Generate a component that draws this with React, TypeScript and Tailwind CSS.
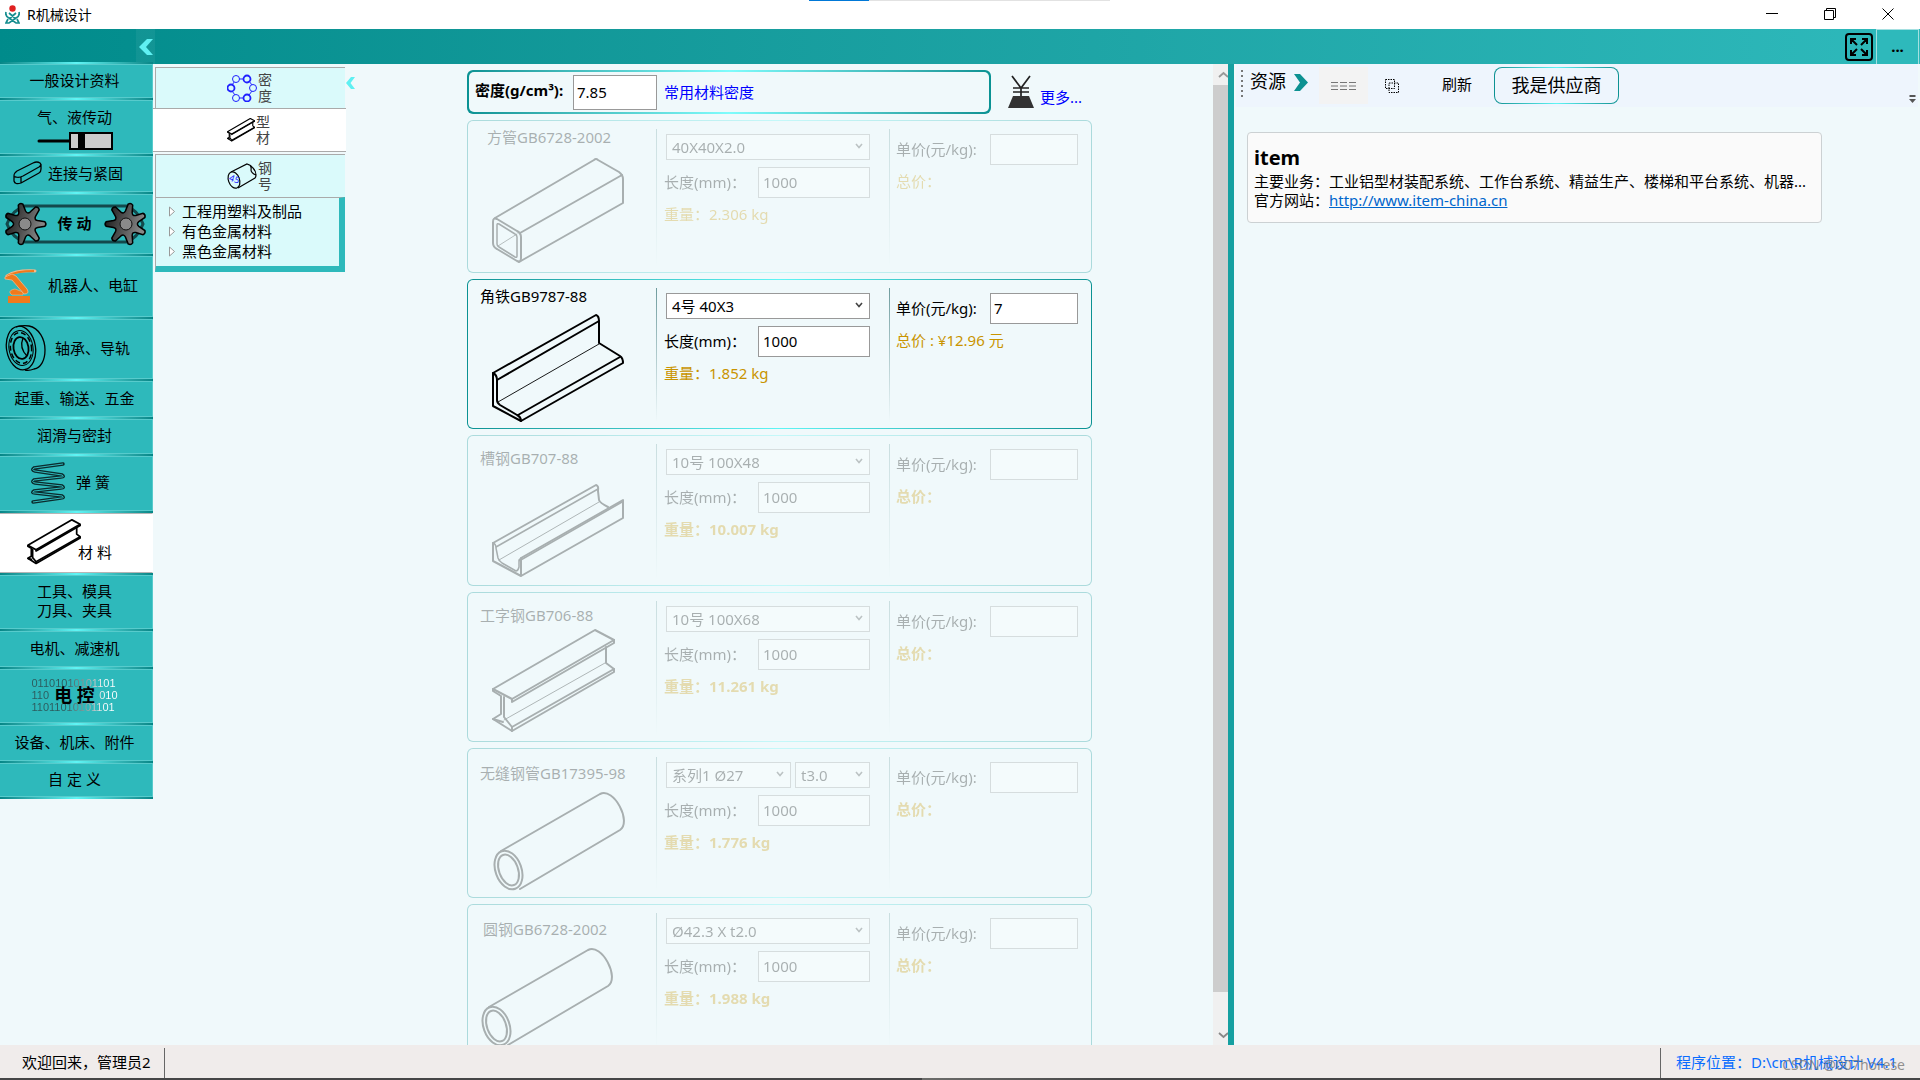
import React, { type ReactNode } from "react";

type DrawingKind = "square" | "angle" | "channel" | "beam" | "pipe";

type Profile = {
  id: string;
  name: string;
  titleClass: string;
  specs: string[];
  price: string;
  total: string;
  weight: string;
  bold: boolean;
  active: boolean;
  drawing: DrawingKind;
  drawingClass: string;
};

const profiles: Profile[] = [
  { id: "fg", name: "方管GB6728-2002", titleClass: "pl-[19px] pt-[5px]", specs: ["40X40X2.0"], price: "", total: "总价：", weight: "2.306 kg", bold: false, active: false, drawing: "square", drawingClass: "ml-[23px]" },
  { id: "jt", name: "角铁GB9787-88", titleClass: "pl-[12px] pt-[5px]", specs: ["4号 40X3"], price: "7", total: "总价 : ¥12.96 元", weight: "1.852 kg", bold: false, active: true, drawing: "angle", drawingClass: "ml-[23px]" },
  { id: "cg", name: "槽钢GB707-88", titleClass: "pl-[12px] pt-[11px]", specs: ["10号 100X48"], price: "", total: "总价：", weight: "10.007 kg", bold: true, active: false, drawing: "channel", drawingClass: "ml-[23px]" },
  { id: "gz", name: "工字钢GB706-88", titleClass: "pl-[12px] pt-[11px]", specs: ["10号 100X68"], price: "", total: "总价：", weight: "11.261 kg", bold: true, active: false, drawing: "beam", drawingClass: "ml-[23px]" },
  { id: "wf", name: "无缝钢管GB17395-98", titleClass: "pl-[12px] pt-[13px]", specs: ["系列1 Ø27", "t3.0"], price: "", total: "总价：", weight: "1.776 kg", bold: true, active: false, drawing: "pipe", drawingClass: "ml-[24px]" },
  { id: "yg", name: "圆钢GB6728-2002", titleClass: "pl-[15px] pt-[13px]", specs: ["Ø42.3 X t2.0"], price: "", total: "总价：", weight: "1.988 kg", bold: true, active: false, drawing: "pipe", drawingClass: "ml-[12px]" },
];

const beamOutline = (
  <>
    <path d="M2 61L104 2L123 12L21 71Z" />
    <path d="M2 61V63L10 68V86L2 91L21 103L123 44V41L115 35V19" />
    <path d="M21 71V74L123 15V12" />
    <path d="M13 69V89L21 99L123 41M21 99V103M2 91L12 94" />
  </>
);

function ProfileDrawing({ kind, className }: { kind: DrawingKind; className: string }) {
  const common = { fill: "none", stroke: "black", strokeWidth: 2, strokeLinejoin: "round" as const, strokeLinecap: "round" as const, className: `shrink-0 ${className}`, "aria-hidden": true };
  switch (kind) {
    case "square":
      return (
        <svg {...common} width="134" height="109" viewBox="0 0 134 109">
          <path d="M4 61L103 3Q105 1 107 3L128 15Q132 18 132 22V46L28 105" />
          <path d="M2 65Q2 60 6 62L26 74Q30 76 30 80V101Q30 106 26 104L6 92Q2 90 2 86Z" />
          <path d="M6 68Q6 66 8 67L24 77Q26 78 26 80V99Q26 101 24 100L8 90Q6 89 6 87Z" strokeWidth="1.5" />
          <path d="M29 76L131 18" />
          <path d="M7 89L26 77" strokeWidth="0.8" />
        </svg>
      );
    case "angle":
      return (
        <svg {...common} width="134" height="109" viewBox="0 0 134 109">
          <path d="M105 2Q108 3 108 8V30L129 43Q132 45 132 50L30 108L2 93V60Z" />
          <path d="M2 60Q6 62 6 67V87Q6 90 9 92L26 102Q30 104 30 108M6 67L108 8M27 102L129 44" />
          <path d="M7 89L108 31" strokeWidth="0.9" />
        </svg>
      );
    case "channel":
      return (
        <svg {...common} width="134" height="96" viewBox="0 0 134 96">
          <path d="M2 60L105 2Q108 3 107 8L108 17Q109 20 117 24" />
          <path d="M2 60V78L30 93V75L132 17V35L30 93" />
          <path d="M2 60Q5 61 5 65L7 75Q8 78 11 80L25 88Q27 88 28 84V77L30 75M5 64L107 6M28 78L131 19" strokeWidth="1.5" />
          <path d="M8 77L108 19" strokeWidth="0.9" />
        </svg>
      );
    case "beam":
      return (
        <svg {...common} width="125" height="107" viewBox="0 0 125 107">
          {beamOutline}
          <path d="M13 92L114 35" strokeWidth="0.9" />
        </svg>
      );
    default:
      return (
        <svg {...common} width="134" height="100" viewBox="0 0 134 100">
          <path d="M9 60L108 3C122 -4 140 31 128 39L28 98" />
          <ellipse cx="16.500" cy="79" rx="13" ry="20" transform="rotate(-20 16.500 79)" />
          <ellipse cx="16.500" cy="79" rx="9.500" ry="16" transform="rotate(-20 16.500 79)" />
        </svg>
      );
  }
}

function gearPath(teeth: number, inner: number, outer: number, start: number) {
  const step = (Math.PI * 2) / teeth;
  const at = (r: number, a: number) => `${(r * Math.cos(a)).toFixed(2)} ${(r * Math.sin(a)).toFixed(2)}`;
  let d = "";
  for (let i = 0; i < teeth; i++) {
    const a = start + i * step;
    d += `${i === 0 ? "M" : "L"}${at(inner, a - step * 0.3)}`;
    d += `L${at(outer - 1, a - step * 0.13)}Q${at(outer + 1, a)} ${at(outer - 1, a + step * 0.13)}`;
    d += `L${at(inner, a + step * 0.3)}Q${at(inner - 3, a + step * 0.5)} ${at(inner, a + step * 0.7)}`;
  }
  return d + "Z";
}

function GearBelt() {
  return (
    <svg width="144" height="46" viewBox="0 0 144 46" className="absolute left-1 top-[6px]" aria-hidden>
      <defs>
        <linearGradient id="gearFill" x1="0" y1="0" x2="1" y2="0.3">
          <stop offset="0" stopColor="#111" />
          <stop offset="1" stopColor="#888" />
        </linearGradient>
      </defs>
      <path d="M21 5H122Q134 9 139 23Q134 37 122 41H21Q8 37 3 23Q8 9 21 5Z" fill="none" stroke="#13494c" strokeWidth="3" />
      <path d={gearPath(7, 13, 21, 0)} transform="translate(21 23)" fill="url(#gearFill)" stroke="#000" strokeWidth="1.500" />
      <path d={gearPath(7, 13, 21, Math.PI)} transform="translate(122 23)" fill="url(#gearFill)" stroke="#000" strokeWidth="1.500" />
      <circle cx="21" cy="23" r="6" fill="#8a8a8a" stroke="#111" strokeWidth="1" />
      <circle cx="122" cy="23" r="6" fill="#8a8a8a" stroke="#111" strokeWidth="1" />
    </svg>
  );
}

const Cylinder = () => (
  <svg width="76" height="20" viewBox="0 0 76 20" aria-hidden>
    <path d="M2 10H32" stroke="#000" strokeWidth="3" strokeLinecap="round" />
    <rect x="33" y="2" width="42" height="16" fill="#ccc" stroke="#000" strokeWidth="2" />
    <rect x="41" y="1" width="7" height="18" fill="#000" />
  </svg>
);

const KeyIcon = () => (
  <svg width="29" height="24" viewBox="0 0 29 24" fill="none" stroke="#000" strokeWidth="1.300" strokeLinejoin="round" aria-hidden>
    <path d="M1 15Q1 12 4 10L20 2Q24 0 27 2Q29 4 26 6L10 15Q6 17 3 16Q1 16 1 15V20Q2 24 8 22L26 12Q28 11 28 8V3M8 16V22" />
  </svg>
);

const RobotIcon = () => (
  <svg width="33" height="34" viewBox="0 0 33 34" aria-hidden>
    <path d="M3 7Q12 1 31 2" fill="none" stroke="#f6b98a" strokeWidth="3" strokeLinecap="round" />
    <path d="M3 7Q12 2 30 2" fill="none" stroke="#f07a1c" strokeWidth="2" />
    <path d="M6 24Q5 21 11 20L19 23V26H8Z" fill="#f07a1c" stroke="#f6b98a" strokeWidth="0.600" />
    <path d="M1 8L8 5L12 7L23 20Q26 25 20 25L8 11L1 10Z" fill="#f07a1c" stroke="#f6b98a" strokeWidth="0.800" />
    <rect x="4" y="27" width="22" height="7" fill="#f07a1c" />
  </svg>
);

const BearingIcon = () => (
  <svg width="41" height="46" viewBox="0 0 41 46" fill="none" stroke="#000" strokeWidth="1.300" aria-hidden>
    <path d="M11 2Q18 0 24 1C34 3 40 14 40 25C40 35 36 43 29 44Q24 46 20 45" />
    <ellipse cx="16" cy="23" rx="14.500" ry="22" transform="rotate(-9 16 23)" />
    <ellipse cx="16" cy="23" rx="12" ry="17.500" transform="rotate(-9 16 23)" strokeWidth="1" />
    <ellipse cx="16" cy="23" rx="10.500" ry="15.500" transform="rotate(-9 16 23)" strokeWidth="1.500" strokeDasharray="5 3" />
    <ellipse cx="16" cy="23" rx="7.500" ry="11" transform="rotate(-9 16 23)" strokeWidth="1.800" />
    <path d="M18 13Q14 23 22 31" />
  </svg>
);

const SpringIcon = () => (
  <svg width="34" height="42" viewBox="0 0 34 42" fill="none" aria-hidden>
    <path d="M32 2L3 6Q0 8 4 9L31 13Q34 15 30 15L3 18Q0 20 4 21L31 24Q34 26 30 26L3 29Q0 31 4 31L31 34Q34 36 30 36L2 40" stroke="#0b2c2e" strokeWidth="3.400" strokeLinecap="round" />
    <path d="M32 2L3 6Q0 8 4 9L31 13Q34 15 30 15L3 18Q0 20 4 21L31 24Q34 26 30 26L3 29Q0 31 4 31L31 34Q34 36 30 36L2 40" stroke="#2eb9bb" strokeWidth="1" />
  </svg>
);

function BeamIcon({ className, weight }: { className: string; weight: number }) {
  return (
    <svg className={className} viewBox="0 0 125 105" fill="none" stroke="#000" strokeWidth={weight} strokeLinejoin="round" aria-hidden>
      {beamOutline}
    </svg>
  );
}

function BinaryLabel() {
  return (
    <span className="relative block w-[86px] font-['Liberation_Sans',sans-serif] text-[11px] leading-[12px]">
      <span className="block bg-linear-to-r from-[#2c5a5c] from-40% via-[#a3a3a5] via-65% to-white to-85% bg-clip-text text-left text-transparent">
        <span className="block">01101010101101</span>
        <span className="flex justify-between"><span>110</span><span>010</span></span>
        <span className="block">11011010101101</span>
      </span>
      <span className="absolute inset-0 flex items-center justify-center font-['Noto_Sans','Noto_Sans_CJK_SC',sans-serif] text-[18px] font-bold">电 控</span>
    </span>
  );
}

function NavItem({ height, active = false, className = "justify-center", children }: { height: string; active?: boolean; className?: string; children: ReactNode }) {
  return (
    <li className={`flex flex-col ${height}`}>
      <span className="h-[2px] shrink-0 bg-linear-to-r from-[#058687] via-[#5ff5f5] to-[#058687]" />
      <button
        type="button"
        className={`relative flex w-full flex-1 items-center border-y border-r pb-[2px] pr-[3px] leading-[19px] ${active ? "border-[#b5b5b5] border-r-white bg-white" : "border-[#57cbcc] bg-[#2eb9bb]"} ${className}`}
      >
        {children}
      </button>
    </li>
  );
}

function Sidebar() {
  return (
    <nav className="relative z-10 -mt-[2px] w-[153px] shrink-0" aria-label="分类">
      <ul>
        <NavItem height="h-[36px]">一般设计资料</NavItem>
        <NavItem height="h-[56px]" className="flex-col justify-end gap-1"><span>气、液传动</span><Cylinder /></NavItem>
        <NavItem height="h-[38px]" className="gap-[6px] pl-[13px]"><KeyIcon />连接与紧固</NavItem>
        <NavItem height="h-[62px]"><GearBelt /><b className="relative">传 动</b></NavItem>
        <NavItem height="h-[63px]" className="gap-[11px] pl-[4px]"><RobotIcon />机器人、电缸</NavItem>
        <NavItem height="h-[62px]" className="gap-[9px] pl-[5px]"><BearingIcon />轴承、导轨</NavItem>
        <NavItem height="h-[38px]">起重、输送、五金</NavItem>
        <NavItem height="h-[37px]">润滑与密封</NavItem>
        <NavItem height="h-[57px]" className="gap-[11px] pl-[31px]"><SpringIcon />弹 簧</NavItem>
        <NavItem height="h-[62px]" active className="pl-[27px]"><BeamIcon className="w-[54px]" weight={4} /><span className="-ml-[3px] pt-5">材 料</span></NavItem>
        <NavItem height="h-[56px]">工具、模具<br />刀具、夹具</NavItem>
        <NavItem height="h-[38px]">电机、减速机</NavItem>
        <NavItem height="h-[56px]"><BinaryLabel /></NavItem>
        <NavItem height="h-[38px]">设备、机床、附件</NavItem>
        <NavItem height="h-[36px]">自 定 义</NavItem>
      </ul>
      <div className="h-[2px] bg-linear-to-r from-[#058687] via-[#5ff5f5] to-[#058687]" />
    </nav>
  );
}

const RingIcon = () => (
  <svg width="30" height="28" viewBox="0 0 30 28" fill="none" stroke="#2020ff" aria-hidden>
    <path d="M9 5H20M9 24H20M5 11L8 7M5 17L8 21M25 11L22 7M25 17L22 21" strokeWidth="1" />
    <g fill="#dafafb">
      <circle cx="9" cy="5" r="3.500" /><circle cx="26" cy="14" r="3.500" /><circle cx="9" cy="24" r="3.500" />
      <g strokeWidth="1.800"><circle cx="20" cy="5" r="3.500" /><circle cx="4" cy="14" r="3.500" /><circle cx="20" cy="24" r="3.500" /></g>
    </g>
  </svg>
);

const SteelIcon = () => (
  <svg width="30" height="28" viewBox="0 0 30 28" fill="none" stroke="#000" strokeWidth="1.200" aria-hidden>
    <path d="M4 10L20 2Q25 3 24 8Q24 11 29 13Q29 15 28 16L11 26M20 2Q24 3 26 6Q29 9 29 13" />
    <ellipse cx="7" cy="18" rx="5.500" ry="8.500" transform="rotate(-20 7 18)" />
    <text x="2" y="20" fill="#2020ff" stroke="none" fontSize="9" transform="rotate(20 7 18)">45</text>
  </svg>
);

function SubMenu() {
  const entry = "flex w-full items-center justify-center gap-px pr-[2px] text-[14px] leading-4 text-[#444]";
  const stack = "flex w-[14px] flex-col pb-px";
  return (
    <div className="w-[193px] shrink-0">
      <div className="flex flex-col pt-[3px]">
        <div className="pl-[2px] pr-px"><button type="button" className={`${entry} h-[41px] border-l border-t border-[#aaa] bg-[#dafafb]`}><RingIcon /><span className={stack}><span>密</span><span>度</span></span></button></div>
        <button type="button" className={`${entry} h-[44px] border-y border-[#aaa] bg-white`}><BeamIcon className="w-7" weight={5} /><span className={stack}><span>型</span><span>材</span></span></button>
        <div className="pl-[2px] pr-px pt-[2px]"><button type="button" className={`${entry} h-[43px] border-l border-t border-[#aaa] bg-[#dafafb]`}><SteelIcon /><span className={stack}><span>钢</span><span>号</span></span></button></div>
        <ul className="ml-[2px] mr-px border-b-[6px] border-l border-r-[6px] border-t border-[#2eb9bb] border-l-[#aaa] border-t-[#aaa] bg-[#dafafb] pb-[5px] pt-[3px] text-[15px] leading-5">
          {["工程用塑料及制品", "有色金属材料", "黑色金属材料"].map((label) => (
            <li key={label}>
              <button type="button" className="flex items-center gap-[7px] pl-[13px] text-left">
                <svg width="6" height="11" viewBox="0 0 6 11" fill="#fff" stroke="#999" aria-hidden><path d="M0.500 1V10L5.500 5.500Z" /></svg>
                {label}
              </button>
            </li>
          ))}
        </ul>
      </div>
    </div>
  );
}

const SmallChevron = () => (
  <svg width="8" height="6" viewBox="0 0 8 6" fill="none" stroke="#444" strokeWidth="1.600" className="pointer-events-none absolute right-[7px] top-[9px]" aria-hidden><path d="M1 1L4 4.500L7 1" /></svg>
);

function SpecSelect({ label, value, className }: { label: string; value: string; className: string }) {
  return (
    <span className={`relative block ${className}`}>
      <select aria-label={label} defaultValue={value} className="h-[26px] w-full appearance-none border border-[#999] bg-white pl-[5px] leading-5 outline-none">
        <option>{value}</option>
      </select>
      <SmallChevron />
    </span>
  );
}

function ProfileCard({ p, height }: { p: Profile; height: string }) {
  const line = "absolute bottom-[6px] left-0 top-[8px] w-px bg-linear-to-b from-[#6f9c9e] to-transparent";
  const weightClass = p.bold ? "font-bold" : "font-normal";
  return (
    <section className={`${height} shrink-0 rounded-[6px] bg-linear-to-r from-[#0a9293] via-[#5ff5f5] to-[#0a9293] p-px ${p.active ? "" : "opacity-30"}`}>
      <div className="grid h-full grid-cols-[188px_233px_1fr] rounded-[5px] bg-[#f0f9fb]">
        <div className="flex flex-col justify-between pb-[6px]">
          <h3 className={`leading-[22px] ${p.titleClass}`}>{p.name}</h3>
          <ProfileDrawing kind={p.drawing} className={p.drawingClass} />
        </div>
        <div className="relative pl-[8px] pr-[19px] pt-[13px]">
          <span className={line} />
          <div className="flex gap-1 pl-[2px]">
            {p.specs.map((s, i) => (
              <SpecSelect key={s} label={`${p.name} 规格`} value={s} className={i === 0 ? "flex-1" : "w-[75px]"} />
            ))}
          </div>
          <div className="mt-[7px] flex items-center justify-between">
            <label htmlFor={`${p.id}-len`}>长度(mm)：</label>
            <input id={`${p.id}-len`} defaultValue="1000" className="h-[31px] w-[112px] border border-[#999] bg-white px-1 pb-px outline-none" />
          </div>
          <p className={`mt-[5px] leading-[22px] text-[#c99400] ${weightClass}`}>重量：{p.weight}</p>
        </div>
        <div className="relative pl-[7px] pr-[13px] pt-[13px]">
          <span className={line} />
          <div className="flex items-center justify-between">
            <label htmlFor={`${p.id}-price`}>单价(元/kg):</label>
            <input id={`${p.id}-price`} defaultValue={p.price} className="h-[31px] w-[88px] border border-[#999] bg-white px-[3px] pb-px outline-none" />
          </div>
          <p className={`mt-[5px] leading-[22px] text-[#c99400] ${weightClass}`}>{p.total}</p>
        </div>
      </div>
    </section>
  );
}

function Calculator() {
  return (
    <main className="relative flex min-w-0 flex-1">
      <button type="button" aria-label="收起" className="absolute left-0 top-[13px]">
        <svg width="9" height="12" viewBox="0 0 9 12" fill="#5ff0f2" aria-hidden><path d="M5 0H9L4.500 6L9 12H5L0 6Z" /></svg>
      </button>
      <div className="min-w-0 flex-1 overflow-hidden">
        <div className="mx-auto flex w-[625px] flex-col gap-[6px] pt-[6px]">
          <div className="flex items-start">
            <div className="w-[524px] rounded-[6px] bg-linear-to-r from-[#0a9293] via-[#7ffcfc] to-[#0a9293] p-[2px]">
              <div className="flex h-[40px] items-center rounded-[5px] bg-[#f0f9fb] pl-[6px]">
                <label htmlFor="density" className="w-[98px] pb-[3px] font-bold">密度(g/cm³):</label>
                <input id="density" defaultValue="7.85" className="h-[35px] w-[84px] border border-[#999] bg-white px-[3px] outline-none" />
                <a href="#density" className="ml-[7px] text-[#0000ff]">常用材料密度</a>
              </div>
            </div>
            <div className="ml-[16px] flex h-[44px] items-start pt-[5px]">
              <svg width="28" height="34" viewBox="0 0 28 34" fill="none" stroke="#222" strokeWidth="1.700" aria-hidden>
                <path d="M5 1L14 13L23 1M14 13V22M6 13H22M6 17H22" />
                <path d="M6 21H22L27 33H1Z" fill="#333" stroke="none" />
              </svg>
              <a href="#more" className="ml-[5px] pt-[11px] leading-[22px] text-[#0000ff]">更多...</a>
            </div>
          </div>
          {profiles.map((p, i) => (
            <ProfileCard key={p.id} p={p} height={i === 0 ? "h-[153px]" : i === 2 ? "h-[151px]" : "h-[150px]"} />
          ))}
        </div>
      </div>
      <div className="flex w-[15px] shrink-0 flex-col overflow-hidden bg-[#f0f0f0]" aria-hidden>
        <svg width="17" height="21" viewBox="0 0 17 21" fill="none" stroke="#999" strokeWidth="1.800" className="shrink-0"><path d="M6 13L10.500 9L15 13" /></svg>
        <div className="flex-[907] bg-[#cdcdcd]" />
        <div className="flex-[36]" />
        <svg width="17" height="17" viewBox="0 0 17 17" fill="none" stroke="#888" strokeWidth="1.800" className="shrink-0"><path d="M6 5L10.500 9L15 5" /></svg>
      </div>
    </main>
  );
}

function ResourcePanel() {
  return (
    <aside className="w-[686px] shrink-0">
      <div className="mx-[2px] flex h-[43px] items-start bg-[#eef5fd] pl-[5px]">
        <span className="mt-[6px] h-[29px] w-[2px] bg-[repeating-linear-gradient(to_bottom,#777_0_2px,transparent_2px_5px)]" />
        <h2 className="ml-[7px] mt-[4px] text-[18px] leading-[26px]">资源</h2>
        <svg width="14" height="17" viewBox="0 0 14 17" fill="#0c9192" className="ml-[8px] mt-[10px]" aria-hidden><path d="M0 0H6L14 8.500L6 17H0L6 8.500Z" /></svg>
        <button type="button" aria-label="列表" className="ml-[11px] mt-[3px] flex h-[37px] w-[49px] items-center justify-center bg-[#f3f3f3]">
          <svg width="26" height="8" viewBox="0 0 26 8" stroke="#777" strokeWidth="1" aria-hidden><path d="M0 0.500H7M9 0.500H16M18 0.500H25M0 4H7M9 4H16M18 4H25M0 7.500H7M9 7.500H16M18 7.500H25" /></svg>
        </button>
        <button type="button" aria-label="窗口" className="ml-[17px] mt-[15px]">
          <svg width="14" height="14" viewBox="0 0 14 14" fill="none" stroke="#000" strokeDasharray="1.500 1" aria-hidden><path d="M0.500 0.500H9.500V9.500H0.500Z" /><path d="M4 4H13.500V13.500H4Z" /></svg>
        </button>
        <button type="button" className="ml-[43px] mt-[9px] leading-[22px]">刷新</button>
        <div className="ml-[22px] mt-[3px] rounded-[8px] bg-linear-to-r from-[#0c9192] via-[#5ff5f5] to-[#0c9192] p-[1px]">
          <button type="button" className="flex h-[35px] w-[123px] items-center justify-center rounded-[7px] bg-[#eef5fd] text-[18px]">我是供应商</button>
        </div>
        <svg width="7" height="8" viewBox="0 0 7 8" fill="#555" className="ml-auto mr-[2px] mt-[31px]" aria-hidden><path d="M0.500 0H6.500V2H0.500ZM0 4H7L3.500 8Z" /></svg>
      </div>
      <article className="ml-[13px] mr-[98px] mt-[25px] h-[91px] rounded-[4px] border border-[#ccd1d3] bg-[#fafafa] px-[6px] pt-[11px]">
        <h3 className="text-[20px] font-bold leading-[28px]">item</h3>
        <p className="truncate leading-[19px]">主要业务：工业铝型材装配系统、工作台系统、精益生产、楼梯和平台系统、机器...</p>
        <p className="leading-[19px]">官方网站：<a href="#item" className="text-[#0066cc] underline">http://www.item-china.cn</a></p>
      </article>
    </aside>
  );
}

function TitleBar() {
  return (
    <header className="relative flex h-[29px] shrink-0 items-center justify-between bg-white">
      <div className="flex items-center gap-[7px] pl-[5px]">
        <svg width="15" height="20" viewBox="0 0 15 20" fill="none" aria-hidden>
          <circle cx="7.500" cy="3.500" r="3.200" fill="#e02020" />
          <path d="M1 7Q0 11 4 13L11 18H14L12 14M14 7Q15 11 11 13L4 18H1L3 14M4 8L11 14M11 8L4 14" stroke="#168d8f" strokeWidth="1.700" />
        </svg>
        <h1 className="pb-px text-[14px]">R机械设计</h1>
      </div>
      <div className="absolute left-[809px] top-0 flex h-px w-[301px] bg-[#e2e2e2]"><span className="w-[60px] bg-[#0078d7]" /></div>
      <div className="flex items-center gap-[46px] pb-px pr-[26px] text-black">
        <button type="button" aria-label="最小化"><svg width="12" height="12" viewBox="0 0 12 12" stroke="currentColor" aria-hidden><path d="M0 5.500H12" /></svg></button>
        <button type="button" aria-label="还原"><svg width="12" height="12" viewBox="0 0 12 12" fill="none" stroke="currentColor" aria-hidden><path d="M0.500 2.500H9.500V11.500H0.500ZM2.500 2.500V0.500H11.500V9.500H9.500" /></svg></button>
        <button type="button" aria-label="关闭"><svg width="12" height="12" viewBox="0 0 12 12" fill="none" stroke="currentColor" aria-hidden><path d="M0.500 0.500L11.500 11.500M11.500 0.500L0.500 11.500" /></svg></button>
      </div>
    </header>
  );
}

export default function App() {
  return (
    <div className="flex h-screen flex-col overflow-hidden bg-[#f0f9fb] font-['Noto_Sans','Noto_Sans_CJK_SC',sans-serif] text-[15px] text-black">
      <TitleBar />
      <div className="flex h-[35px] shrink-0 items-stretch bg-linear-to-r from-[#008b8b] to-[#2eb9bb]">
        <button type="button" aria-label="折叠" className="ml-[136px] flex w-[19px] items-center justify-center bg-white/5">
          <svg width="14" height="16" viewBox="0 0 14 16" fill="#5ff0f2" aria-hidden><path d="M8 0H14L7 8L14 16H8L0 8Z" /></svg>
        </button>
        <button type="button" aria-label="全屏" className="ml-auto mr-[3px] self-center">
          <svg width="28" height="28" viewBox="0 0 28 28" fill="none" stroke="#000" strokeWidth="2" aria-hidden>
            <rect x="1" y="1" width="26" height="26" rx="3" />
            <path d="M6 11V6H11M17 6H22V11M22 17V22H17M11 22H6V17M6 6L12 12M22 6L16 12M22 22L16 16M6 22L12 16" />
          </svg>
        </button>
        <button type="button" className="mr-[1px] w-[43px] border border-b-0 border-[#a5e0e1] bg-[#2eb9bb] pb-[3px] font-bold leading-5">...</button>
      </div>
      <div className="flex min-h-0 flex-1">
        <Sidebar />
        <SubMenu />
        <Calculator />
        <div className="w-[6px] shrink-0 bg-[#15a0a1]" />
        <ResourcePanel />
      </div>
      <footer className="relative flex h-[33px] shrink-0 items-stretch justify-between bg-[#f0eceb] pt-[3px]">
        <p className="flex items-center border-r border-[#666] pb-[2px] pl-[22px] pr-[13px]">欢迎回来，管理员2</p>
        <p className="flex w-[260px] items-center border-l border-[#666] pb-[2px] pl-[15px] text-[#0a6cff]">程序位置：D:\cn\R机械设计 V4.1</p>
        <span className="absolute bottom-[3px] right-[15px] text-[14px] leading-5 text-[#777]/80">CSDN @007horese</span>
      </footer>
      <div className="h-[2px] shrink-0 bg-linear-to-r from-[#464647] from-48% via-[#6d6d6b] via-48% to-[#464647] to-58%" />
    </div>
  );
}
